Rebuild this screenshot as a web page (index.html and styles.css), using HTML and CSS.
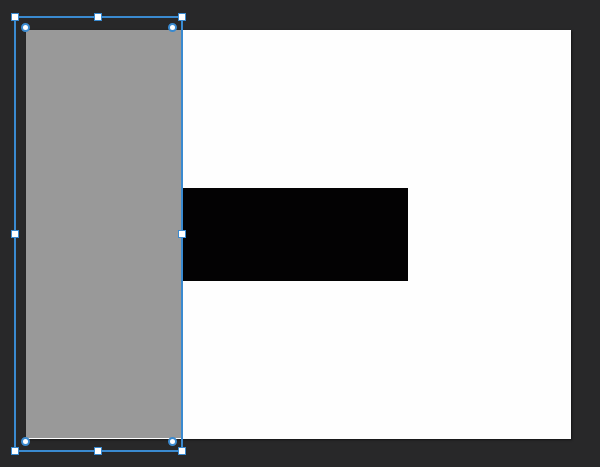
FILE: index.html
```html
<!DOCTYPE html>
<html>
<head>
<meta charset="utf-8">
<link rel="stylesheet" href="styles.css">
</head>
<body>
<div class="workspace">
  <div class="artboard">
    <div class="shape gray"></div>
    <div class="shape black"></div>
  </div>
  <div class="selection">
    <span class="handle h-tl"></span>
    <span class="handle h-tm"></span>
    <span class="handle h-tr"></span>
    <span class="handle h-ml"></span>
    <span class="handle h-mr"></span>
    <span class="handle h-bl"></span>
    <span class="handle h-bm"></span>
    <span class="handle h-br"></span>
    <span class="radius r-tl"></span>
    <span class="radius r-tr"></span>
    <span class="radius r-bl"></span>
    <span class="radius r-br"></span>
  </div>
</div>
</body>
</html>
```
FILE: styles.css
```css
html, body {
  margin: 0;
  padding: 0;
  background: #282829;
}
.workspace {
  position: relative;
  width: 600px;
  height: 467px;
  overflow: hidden;
  background: #282829;
}
.artboard {
  position: absolute;
  left: 26px;
  top: 30px;
  width: 545px;
  height: 409px;
  background: #fefefe;
  box-shadow: 1px 1px 2px rgba(0,0,0,0.5);
}
.shape { position: absolute; }
.gray {
  left: 0;
  top: 0;
  width: 156px;
  height: 408px;
  background: #999999;
}
.black {
  left: 156px;
  top: 158px;
  width: 226px;
  height: 93px;
  background: #030203;
}
.selection {
  position: absolute;
  left: 14px;
  top: 16px;
  width: 165px;
  height: 432px;
  border: 2px solid #3a8ad0;
}
.handle {
  position: absolute;
  width: 6px;
  height: 6px;
  background: #ffffff;
  border: 1px solid #3a8ad0;
  margin: -4px 0 0 -4px;
}
.h-tl { left: -1px; top: -1px; }
.h-tm { left: 82px; top: -1px; }
.h-tr { left: 166px; top: -1px; }
.h-ml { left: -1px; top: 216px; }
.h-mr { left: 166px; top: 216px; }
.h-bl { left: -1px; top: 433px; }
.h-bm { left: 82px; top: 433px; }
.h-br { left: 166px; top: 433px; }
.radius {
  position: absolute;
  width: 5px;
  height: 5px;
  border-radius: 50%;
  background: #ffffff;
  border: 2px solid #3a8ad0;
  margin: -4.5px 0 0 -4.5px;
}
.r-tl { left: 9px; top: 9px; }
.r-tr { left: 156px; top: 9px; }
.r-bl { left: 9px; top: 423px; }
.r-br { left: 156px; top: 423px; }
```
